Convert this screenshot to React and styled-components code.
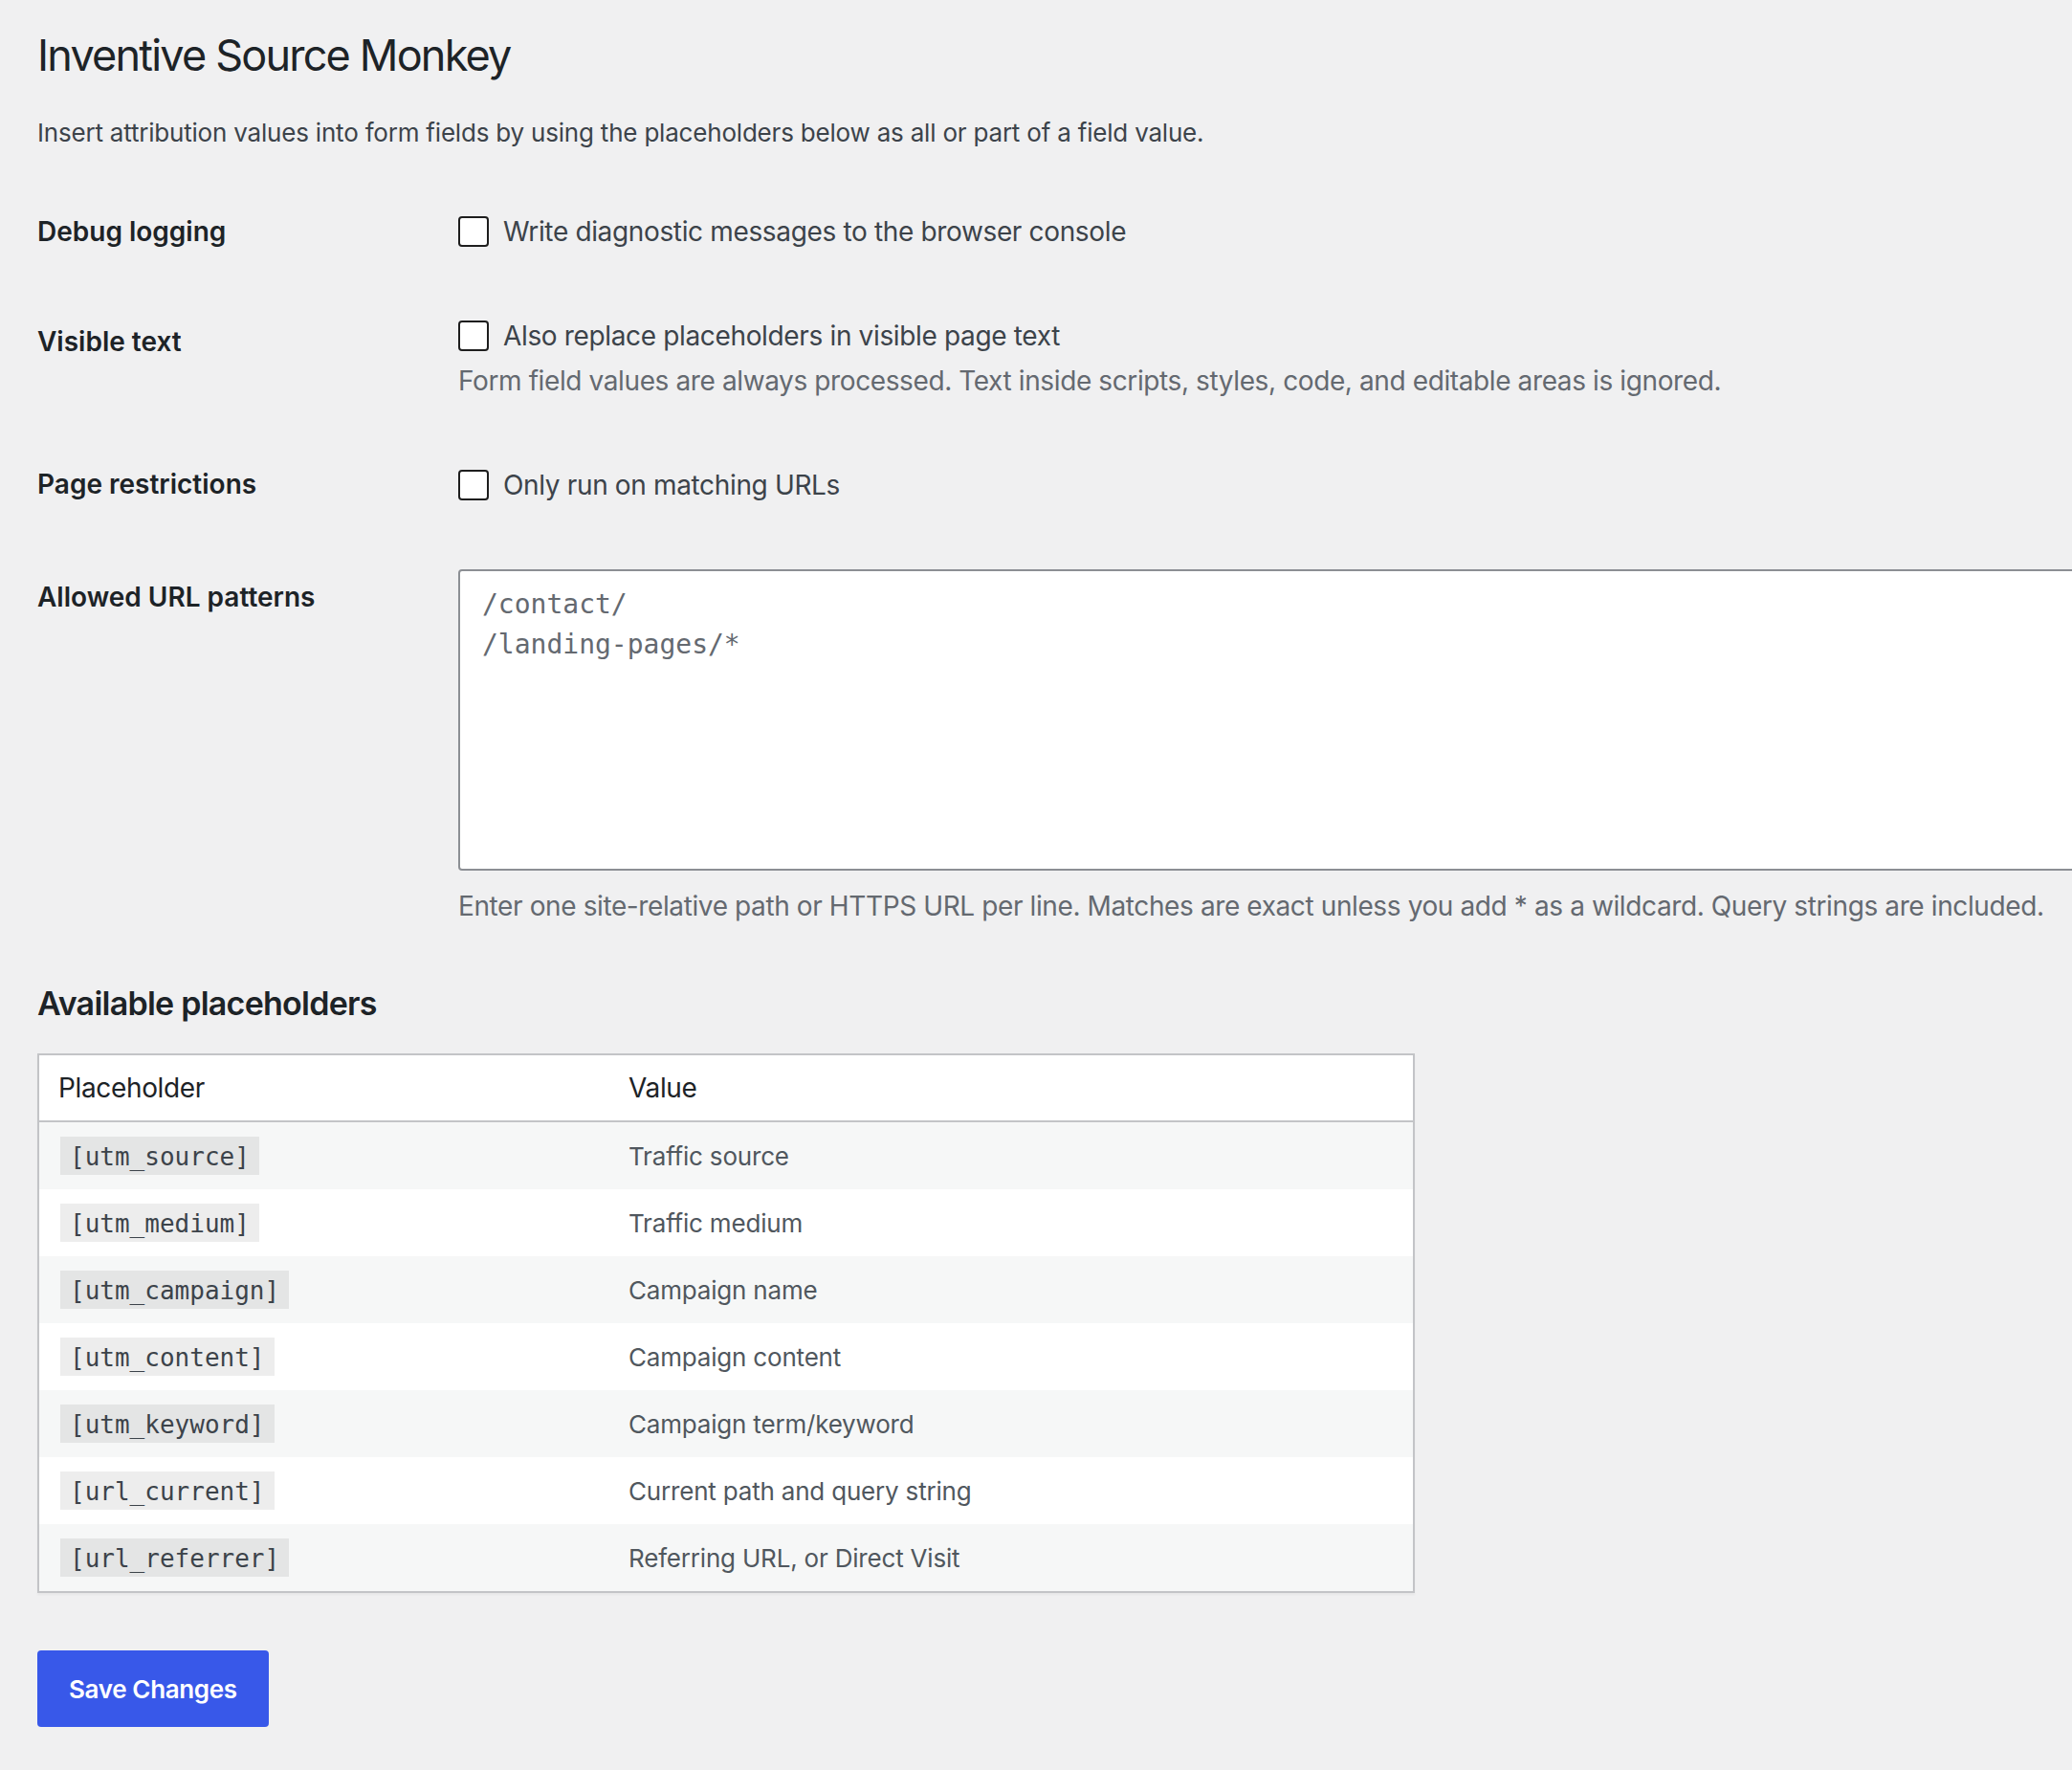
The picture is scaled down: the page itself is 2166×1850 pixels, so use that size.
import React from "react";
import styled, { createGlobalStyle } from "styled-components";

const GlobalStyle = createGlobalStyle`
  html, body {
    margin: 0;
    padding: 0;
    background: #f0f0f1;
    overflow: hidden;
  }
  body {
    font-family: Inter, "Liberation Sans", sans-serif;
    color: #3c434a;
    -webkit-font-smoothing: antialiased;
  }
  * {
    box-sizing: border-box;
  }
`;

const placeholders = [
  ["[utm_source]", "Traffic source"],
  ["[utm_medium]", "Traffic medium"],
  ["[utm_campaign]", "Campaign name"],
  ["[utm_content]", "Campaign content"],
  ["[utm_keyword]", "Campaign term/keyword"],
  ["[url_current]", "Current path and query string"],
  ["[url_referrer]", "Referring URL, or Direct Visit"],
];

export default function App() {
  return (
    <>
      <GlobalStyle />
      <Wrap>
        <Title>Inventive Source Monkey</Title>
        <Intro>
          Insert attribution values into form fields by using the placeholders
          below as all or part of a field value.
        </Intro>

        <Row>
          <Label $top={66}>Debug logging</Label>
          <Field $top={66}>
            <CheckLine>
              <Checkbox type="checkbox" />
              Write diagnostic messages to the browser console
            </CheckLine>
          </Field>
        </Row>

        <Row>
          <Label $top={79}>Visible text</Label>
          <Field $top={73}>
            <CheckLine>
              <Checkbox type="checkbox" />
              Also replace placeholders in visible page text
            </CheckLine>
            <Description $top={9}>
              Form field values are always processed. Text inside scripts,
              styles, code, and editable areas is ignored.
            </Description>
          </Field>
        </Row>

        <Row>
          <Label $top={70}>Page restrictions</Label>
          <Field $top={71}>
            <CheckLine>
              <Checkbox type="checkbox" />
              Only run on matching URLs
            </CheckLine>
          </Field>
        </Row>

        <Row>
          <Label $top={81}>Allowed URL patterns</Label>
          <Field $top={70}>
            <Patterns
              rows={10}
              readOnly
              placeholder={"/contact/\n/landing-pages/*"}
            />
            <Description $top={17}>
              Enter one site-relative path or HTTPS URL per line. Matches are
              exact unless you add * as a wildcard. Query strings are included.
            </Description>
          </Field>
        </Row>

        <SectionTitle>Available placeholders</SectionTitle>

        <Table>
          <thead>
            <tr>
              <HeadCell $first>Placeholder</HeadCell>
              <HeadCell>Value</HeadCell>
            </tr>
          </thead>
          <tbody>
            {placeholders.map(([tag, value]) => (
              <BodyRow key={tag}>
                <Cell>
                  <Code>{tag}</Code>
                </Cell>
                <Cell>{value}</Cell>
              </BodyRow>
            ))}
          </tbody>
        </Table>

        <SaveButton type="button">Save Changes</SaveButton>
      </Wrap>
    </>
  );
}

const Wrap = styled.div`
  padding: 28px 0 40px 39px;
  min-height: 1850px;
`;

const Title = styled.h1`
  margin: 0;
  font-size: 45px;
  line-height: 60px;
  font-weight: 400;
  letter-spacing: -1.8px;
  color: #1d2327;
`;

const Intro = styled.p`
  margin: 31px 0 0;
  font-size: 26px;
  line-height: 39px;
  letter-spacing: -0.2px;
  color: #3c434a;
`;

const Row = styled.div`
  display: grid;
  grid-template-columns: 440px 1fr;
`;

const Label = styled.div`
  padding-top: ${(p) => p.$top}px;
  font-size: 28px;
  line-height: 36px;
  font-weight: 600;
  color: #1d2327;
`;

const Field = styled.div`
  padding-top: ${(p) => p.$top}px;
  min-width: 0;
`;

const CheckLine = styled.label`
  display: flex;
  align-items: center;
  gap: 15px;
  height: 36px;
  font-size: 28px;
  letter-spacing: -0.35px;
  color: #3c434a;
`;

const Checkbox = styled.input`
  appearance: none;
  margin: 0;
  width: 32px;
  height: 32px;
  flex: none;
  background: #fff;
  border: 2px solid #1e1e1e;
  border-radius: 4px;
`;

const Description = styled.p`
  margin: ${(p) => p.$top}px 0 0;
  font-size: 28px;
  line-height: 40px;
  letter-spacing: -0.39px;
  color: #646970;
  white-space: nowrap;
`;

const Patterns = styled.textarea`
  display: block;
  width: 1760px;
  height: 315px;
  margin: 0;
  padding: 14px 23px;
  background: #fff;
  border: 2px solid #8c8f94;
  border-radius: 4px;
  font-family: "DejaVu Sans Mono", "Liberation Mono", monospace;
  font-size: 28px;
  line-height: 42px;
  resize: none;
  outline: none;

  &::placeholder {
    color: #646970;
    opacity: 1;
  }
`;

const SectionTitle = styled.h2`
  margin: 60px 0 0;
  font-size: 34px;
  line-height: 44px;
  font-weight: 600;
  letter-spacing: -0.75px;
  color: #1d2327;
`;

const Table = styled.table`
  margin-top: 30px;
  width: 1440px;
  border-spacing: 0;
  background: #fff;
  border: 2px solid #c3c4c7;
  box-shadow: 0 2px 2px rgba(0, 0, 0, 0.04);
`;

const HeadCell = styled.th`
  width: ${(p) => (p.$first ? "596px" : "auto")};
  height: 70px;
  padding: 0 20px;
  text-align: left;
  font-size: 28px;
  font-weight: 400;
  letter-spacing: -0.35px;
  color: #1d2327;
  border-bottom: 2px solid #c3c4c7;
`;

const BodyRow = styled.tr`
  &:nth-child(odd) {
    background: #f6f7f7;
  }
`;

const Cell = styled.td`
  height: 70px;
  padding: 0 20px;
  font-size: 26px;
  letter-spacing: -0.19px;
  color: #50575e;
  vertical-align: middle;
`;

const Code = styled.code`
  margin: 0 2px;
  padding: 6px 10px 4px;
  background: rgba(0, 0, 0, 0.07);
  font-family: "DejaVu Sans Mono", "Liberation Mono", monospace;
  font-size: 26px;
  letter-spacing: 0;
  color: #3c434a;
`;

const SaveButton = styled.button`
  display: block;
  margin-top: 60px;
  height: 80px;
  padding: 0 33px;
  background: #3858e9;
  border: none;
  border-radius: 4px;
  font-family: Inter, "Liberation Sans", sans-serif;
  font-size: 26px;
  font-weight: 600;
  letter-spacing: -0.35px;
  color: #fff;
`;
